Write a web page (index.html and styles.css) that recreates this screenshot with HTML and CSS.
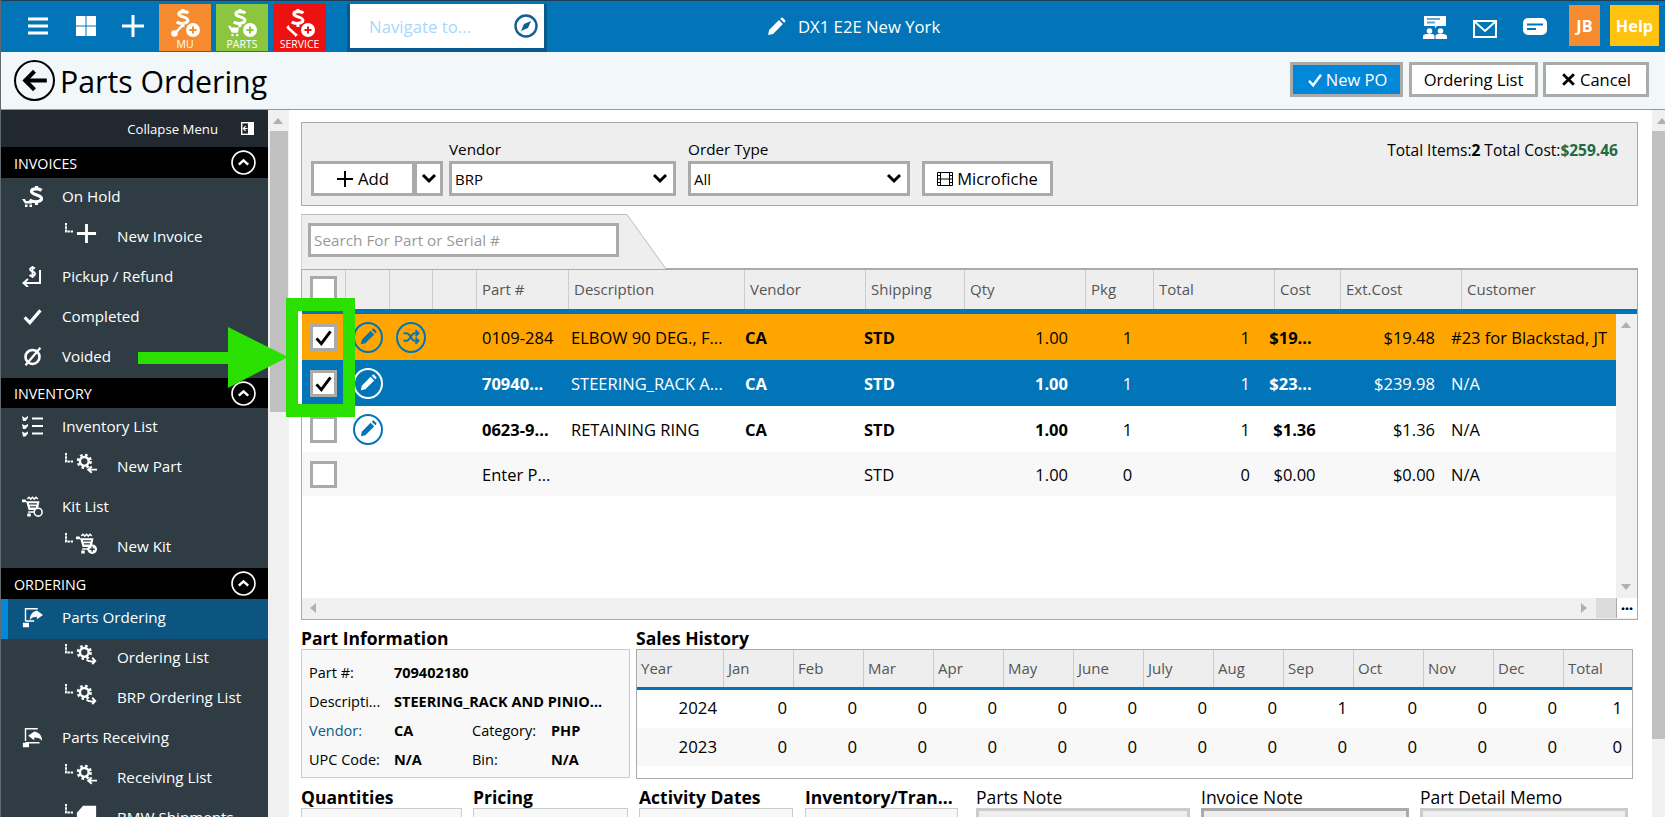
FILE: index.html
```html
<!DOCTYPE html>
<html lang="en">
<head>
<meta charset="utf-8">
<title>Parts Ordering</title>
<link rel="stylesheet" href="styles.css">
</head>
<body>
<svg class="defs" width="0" height="0" aria-hidden="true">
  <symbol id="dollar" viewBox="0 0 16 20"><path d="M14.500 4.500C12.500 2.500 4 2 4 5.500S14 8.500 14 12.500 5 17 1.500 14.500M8.500 0v3.500M8.500 16v4" fill="none" stroke="currentColor" stroke-width="3.400"/></symbol>
  <symbol id="onhold" viewBox="0 0 21 21"><path d="M19.500 4.500C17.500 2.500 9.500 2 9.500 5.500S19.500 8.500 19.500 12.500 11 16.500 7.500 14M14.500 0v3M14.500 16v3" fill="none" stroke="currentColor" stroke-width="3.200"/><path fill="currentColor" d="M0 13h3l1 2h6v2.500H3zM3 18.500h2.500V21H3zM7.500 18.500H10V21H7.500z"/></symbol>
  <symbol id="pencil" viewBox="0 0 24 24"><path fill="currentColor" d="M2.500 21.500l1.200-6L15.500 3.700l4.800 4.800L8.500 20.300zM17 2.200l1.300-1.200c.6-.5 1.300-.5 1.800 0l2.900 2.900c.5.5.5 1.200 0 1.800L21.800 7z"/></symbol>
  <symbol id="gear" viewBox="0 0 24 24"><circle cx="9.500" cy="9.500" r="7" fill="none" stroke="currentColor" stroke-width="3.500" stroke-dasharray="2.800 2.700"/><circle cx="9.500" cy="9.500" r="5" fill="none" stroke="currentColor" stroke-width="2.800"/><path d="M24 19h-10M18 15.500L14 19l4 3.500" fill="none" stroke="currentColor" stroke-width="2.200"/></symbol>
  <symbol id="gearo" viewBox="0 0 24 24"><circle cx="9.500" cy="9.500" r="7" fill="none" stroke="currentColor" stroke-width="3.500" stroke-dasharray="2.800 2.700"/><circle cx="9.500" cy="9.500" r="5" fill="none" stroke="currentColor" stroke-width="2.800"/><path d="M12 18c2.500 2 6 2.500 10 1.500M18.500 15.500l3.500 4-3.500 3.500" fill="none" stroke="currentColor" stroke-width="2.200"/></symbol>
  <symbol id="cartfind" viewBox="0 0 24 24"><path d="M6 3.500l2-2 2 2 2-2 2 2 2-2 2 2" fill="none" stroke="currentColor" stroke-width="1.800"/><path fill="currentColor" d="M0 4h4l1 2h15l-2 10H7.500L5 7H0zM7 17.500h11V19H7zM6 20h4v3.500H6z"/><path d="M8 9h9M9 12.500h7" stroke="#2f3c44" stroke-width="1.500"/><circle cx="18.500" cy="18.500" r="4.500" fill="#2f3c44" stroke="currentColor" stroke-width="1.800"/></symbol>
  <symbol id="cartplus" viewBox="0 0 24 24"><path d="M6 3.500l2-2 2 2 2-2 2 2 2-2 2 2" fill="none" stroke="currentColor" stroke-width="1.800"/><path fill="currentColor" d="M0 4h4l1 2h15l-2 10H7.500L5 7H0zM7 17.500h11V19H7zM6 20h4v3.500H6z"/><path d="M8 9h9M9 12.500h7" stroke="#2f3c44" stroke-width="1.500"/><circle cx="18.500" cy="18.500" r="5.500" fill="currentColor"/><path d="M18.500 15.500v6M15.500 18.500h6" stroke="#2f3c44" stroke-width="1.600"/></symbol>
  <symbol id="check" viewBox="0 0 24 24"><path d="M3 13l6 6L21 5" fill="none" stroke="currentColor" stroke-width="3.600"/></symbol>
  <symbol id="up" viewBox="0 0 24 24"><circle cx="12" cy="12" r="11" fill="none" stroke="currentColor" stroke-width="1.600"/><path d="M7.500 14l4.500-4 4.500 4" fill="none" stroke="currentColor" stroke-width="2.400"/></symbol>
  <symbol id="elbow" viewBox="0 0 8 10"><path d="M1 0v8.500h7" fill="none" stroke="currentColor" stroke-width="2" stroke-dasharray="2.500 .8"/></symbol>
  <symbol id="down" viewBox="0 0 16 12"><path d="M2 2l6 6 6-6" fill="none" stroke="currentColor" stroke-width="3"/></symbol>
  <symbol id="tick" viewBox="0 0 24 24"><path d="M4 13l5.500 6L20 5" fill="none" stroke="currentColor" stroke-width="3.300"/></symbol>
  <symbol id="plusbadge" viewBox="0 0 24 24"><circle cx="12" cy="12" r="12" fill="#fff"/><path d="M12 6v12M6 12h12" stroke="currentColor" stroke-width="3.400"/></symbol>
</svg>

<div class="app">
  <header class="topbar">
    <button class="tool" aria-label="Menu"><svg class="i22" viewBox="0 0 22 22"><path d="M1 4h20M1 11h20M1 18h20" stroke="#fff" stroke-width="3"/></svg></button>
    <button class="tool" aria-label="Dashboard"><svg class="i22" viewBox="0 0 22 22"><path fill="#fff" d="M1 1h9.500v9.500H1zM11.500 1H21v9.500h-9.500zM1 11.500h9.500V21H1zM11.500 11.500H21V21h-9.500z"/></svg></button>
    <button class="tool" aria-label="Add"><svg class="i22" viewBox="0 0 22 22"><path d="M11 0v22M0 11h22" stroke="#fff" stroke-width="3"/></svg></button>
    <div class="tiles">
      <div class="tile tile-mu">
        <div class="tile-art">
          <svg class="tile-dollar"><use href="#dollar"/></svg>
          <svg class="tile-key" viewBox="0 0 14 14"><path d="M13 1L6 8" stroke="#fff" stroke-width="2.800"/><circle cx="4" cy="10" r="3.800" fill="#fff"/></svg>
          <svg class="tile-plus"><use href="#plusbadge"/></svg>
        </div>
        <span>MU</span>
      </div>
      <div class="tile tile-parts">
        <div class="tile-art">
          <svg class="tile-dollar"><use href="#dollar"/></svg>
          <svg class="tile-key" viewBox="0 0 14 14"><path fill="#fff" d="M0 1h3l1 2h9l-1.500 6H4.500zM4 10.500h2.500V13H4zM9.500 10.500H12V13H9.500z"/></svg>
          <svg class="tile-plus"><use href="#plusbadge"/></svg>
        </div>
        <span>PARTS</span>
      </div>
      <div class="tile tile-service">
        <div class="tile-art">
          <svg class="tile-dollar"><use href="#dollar"/></svg>
          <svg class="tile-key" viewBox="0 0 14 14"><path d="M2 3l9 8" stroke="#fff" stroke-width="3"/><path d="M0 3l3-3 1 2-2 2zM14 11l-3 3-1-2 2-2z" fill="#fff"/></svg>
          <svg class="tile-plus"><use href="#plusbadge"/></svg>
        </div>
        <span>SERVICE</span>
      </div>
    </div>
    <div class="navbox">
      <span class="nav-placeholder">Navigate to...</span>
      <svg class="compass" viewBox="0 0 24 24"><circle cx="12" cy="12" r="10.500" fill="none" stroke="#0f5f91" stroke-width="2.400"/><path fill="#0f5f91" d="M17 7l-3 7-7 3 3-7z"/></svg>
    </div>
    <div class="location">
      <svg class="loc-pencil"><use href="#pencil"/></svg>
      <span>DX1 E2E New York</span>
    </div>
    <div class="top-right">
      <svg class="top-ico group" viewBox="0 0 24 23"><path fill="#fff" d="M1 0h22v10H14l-2 2.500V10H1z"/><path d="M4 3h13M4 6.500h8" stroke="#5fa8d6" stroke-width="1.800"/><circle cx="6.500" cy="15" r="2.800" fill="#fff"/><circle cx="17.500" cy="15" r="2.800" fill="#fff"/><path fill="#fff" d="M0 23v-2c0-3 2-3 6.500-3s5 0 5 3v2zM12.500 23v-2c0-3 1-3 5-3s6.500 0 6.500 3v2z"/></svg>
      <svg class="top-ico mail" viewBox="0 0 24 18"><path d="M1 1h22v16H1z" fill="none" stroke="#fff" stroke-width="2"/><path d="M2 2l10 9 10-9" fill="none" stroke="#fff" stroke-width="2"/></svg>
      <svg class="top-ico chat" viewBox="0 0 24 17"><rect width="24" height="17" rx="5" fill="#fff"/><path d="M4 6.500h16M4 11h9" stroke="#0275b8" stroke-width="2"/></svg>
      <div class="badge badge-jb">JB</div>
      <div class="badge badge-help">Help</div>
    </div>
  </header>

  <div class="pagehead">
    <svg class="back" viewBox="0 0 40 40"><circle cx="20" cy="20" r="19" fill="none" stroke="#000" stroke-width="2"/><path d="M32 20H11M20 11l-9 9 9 9" fill="none" stroke="#000" stroke-width="4"/></svg>
    <h1 class="pagetitle">Parts Ordering</h1>
    <div class="head-actions">
      <button class="btn btn-primary"><svg class="btn-tick"><use href="#tick"/></svg>New PO</button>
      <button class="btn btn-order">Ordering List</button>
      <button class="btn btn-cancel"><svg class="btn-x" viewBox="0 0 14 14"><path d="M2 2l10 10M12 2L2 12" stroke="#000" stroke-width="2.600"/></svg>Cancel</button>
    </div>
  </div>

  <div class="workspace">
    <nav class="sidebar">
      <div class="collapse">
        <span>Collapse Menu</span>
        <svg class="collapse-ico" viewBox="0 0 14 14"><path fill="#fff" d="M0 0h14v14H0z"/><path fill="#22282f" d="M1.500 1.500h6v11h-6z"/><path d="M2.500 7H7M5 4.500L2.500 7 5 9.500" stroke="#fff" fill="none" stroke-width="1.300"/></svg>
      </div>
      <div class="sect"><span>INVOICES</span><svg class="sect-ico"><use href="#up"/></svg></div>
      <a class="row"><svg class="row-ico"><use href="#onhold"/></svg><span>On Hold</span></a>
      <a class="row sub"><svg class="elbow"><use href="#elbow"/></svg><svg class="sub-ico" viewBox="0 0 22 22"><path d="M11 1v20M1 11h20" stroke="#fff" stroke-width="3"/></svg><span>New Invoice</span></a>
      <a class="row"><svg class="row-ico" viewBox="0 0 21 21"><path d="M13 2.500c-2-1.500-5-1-5 1s5.500 2 5 4.500-4 2.500-5.500 1M10.500 0v12" fill="none" stroke="#fff" stroke-width="1.900"/><path d="M18 4v13H2M6 13l-4.500 4L6 21" fill="none" stroke="#fff" stroke-width="2"/></svg><span>Pickup / Refund</span></a>
      <a class="row"><svg class="row-ico"><use href="#check"/></svg><span>Completed</span></a>
      <a class="row"><svg class="row-ico" viewBox="0 0 24 24"><circle cx="12" cy="12.500" r="8" fill="none" stroke="#fff" stroke-width="3"/><path d="M4 22L21 2" stroke="#fff" stroke-width="2.500"/></svg><span>Voided</span></a>
      <div class="sect sect-b"><span>INVENTORY</span><svg class="sect-ico"><use href="#up"/></svg></div>
      <a class="row"><svg class="row-ico" viewBox="0 0 21 21"><path d="M10 2.500h11M10 10h11M10 17.500h11" stroke="#fff" stroke-width="1.800"/><path d="M0 0l3 2 3-2v2L3.500 5H1zM0 8l3 1.500L6 8v2l-2.500 3H1zM0 15.500l3 1.500 3-1.500v2L3.500 20.500H1z" fill="#fff"/></svg><span>Inventory List</span></a>
      <a class="row sub"><svg class="elbow"><use href="#elbow"/></svg><svg class="sub-ico"><use href="#gear"/></svg><span>New Part</span></a>
      <a class="row"><svg class="row-ico"><use href="#cartfind"/></svg><span>Kit List</span></a>
      <a class="row sub"><svg class="elbow"><use href="#elbow"/></svg><svg class="sub-ico"><use href="#cartplus"/></svg><span>New Kit</span></a>
      <div class="sect"><span>ORDERING</span><svg class="sect-ico"><use href="#up"/></svg></div>
      <a class="row active"><svg class="row-ico" viewBox="0 0 24 24"><path d="M4 16V2h14M4 16h10" fill="none" stroke="#fff" stroke-width="1.600"/><path fill="#fff" d="M17 4l7 5-7 5v-3c-4 0-6 1-8 4 0-6 3-10 8-11zM1 18h7v5H1z"/></svg><span>Parts Ordering</span></a>
      <a class="row sub"><svg class="elbow"><use href="#elbow"/></svg><svg class="sub-ico"><use href="#gearo"/></svg><span>Ordering List</span></a>
      <a class="row sub"><svg class="elbow"><use href="#elbow"/></svg><svg class="sub-ico"><use href="#gearo"/></svg><span>BRP Ordering List</span></a>
      <a class="row"><svg class="row-ico" viewBox="0 0 24 24"><path d="M4 16V2h14M4 18h16" fill="none" stroke="#fff" stroke-width="1.600"/><path fill="#fff" d="M14 5L7 10l7 5v-3c4 0 7 1 9 4 0-6-3-10-9-11zM1 18h7v5H1z"/></svg><span>Parts Receiving</span></a>
      <a class="row sub"><svg class="elbow"><use href="#elbow"/></svg><svg class="sub-ico"><use href="#gear"/></svg><span>Receiving List</span></a>
      <a class="row sub"><svg class="elbow"><use href="#elbow"/></svg><svg class="sub-ico" viewBox="0 0 24 24"><path fill="#fff" d="M8 2h15v22H1v-14z"/></svg><span>BMW Shipments</span></a>
    </nav>

    <div class="vscroll vscroll-side"><i class="arrow-up"></i><div class="thumb thumb-side"></div></div>

    <main class="main">
      <section class="toolbar">
        <div class="addgroup">
          <button class="btn-add"><svg class="add-plus" viewBox="0 0 16 16"><path d="M8 0v16M0 8h16" stroke="#000" stroke-width="2"/></svg>Add</button>
          <button class="btn-caret" aria-label="More"><svg class="caret"><use href="#down"/></svg></button>
        </div>
        <label class="field field-vendor"><span class="field-label">Vendor</span><span class="select"><span>BRP</span><svg class="caret"><use href="#down"/></svg></span></label>
        <label class="field field-type"><span class="field-label">Order Type</span><span class="select"><span>All</span><svg class="caret"><use href="#down"/></svg></span></label>
        <button class="btn-fiche"><svg class="film" viewBox="0 0 16 16"><path d="M.5 1.500h15v13H.5z" fill="none" stroke="#000"/><path d="M3.500 1.500v13M12.500 1.500v13M3.500 8h9" stroke="#000"/><path d="M.5 4.500h3M.5 8h3M.5 11.500h3M12.500 4.500h3M12.500 8h3M12.500 11.500h3" stroke="#000"/></svg>Microfiche</button>
        <div class="totals">Total Items:<b>2</b> Total Cost:<b class="money">$259.46</b></div>
      </section>

      <div class="tabstrip">
        <svg class="tabshape" viewBox="0 0 366 55" preserveAspectRatio="none"><path d="M0 55V.5h326L365 55" fill="#eee" stroke="#bbb"/></svg>
        <div class="search">Search For Part or Serial #</div>
      </div>

      <section class="grid">
        <div class="ghead">
          <div class="gh gh-check"><span class="box box-head"></span></div>
          <div class="gh"></div><div class="gh"></div><div class="gh"></div>
          <div class="gh">Part #</div><div class="gh">Description</div><div class="gh">Vendor</div><div class="gh">Shipping</div><div class="gh">Qty</div><div class="gh">Pkg</div><div class="gh">Total</div><div class="gh">Cost</div><div class="gh">Ext.Cost</div><div class="gh gh-last">Customer</div>
        </div>
        <div class="gbody">
          <div class="grows">
            <div class="gr gr-orange">
              <div class="c c-c"><span class="box box-on"><svg class="tickmark"><use href="#tick"/></svg></span></div>
              <div class="c c-c"><span class="circ"><svg class="circ-ico"><use href="#pencil"/></svg></span></div>
              <div class="c c-c"><span class="circ"><svg class="circ-ico" viewBox="0 0 24 24"><path d="M2 7h4c5 0 6 10 11 10h4M2 17h4c5 0 6-10 11-10h4" fill="none" stroke="currentColor" stroke-width="2.400"/><path d="M18 3l4 4-4 4M18 13l4 4-4 4" fill="none" stroke="currentColor" stroke-width="2.400"/></svg></span></div>
              <div class="c"></div>
              <div class="c c-p">0109-284</div><div class="c c-d">ELBOW 90 DEG., F...</div><div class="c b">CA</div><div class="c b">STD</div>
              <div class="c c-r">1.00</div><div class="c c-m">1</div><div class="c c-r">1</div><div class="c c-m c-t b">$19...</div><div class="c c-r">$19.48</div><div class="c c-u">#23 for Blackstad, JT</div>
            </div>
            <div class="gr gr-blue">
              <div class="c c-c"><span class="box box-on"><svg class="tickmark"><use href="#tick"/></svg></span></div>
              <div class="c c-c"><span class="circ"><svg class="circ-ico"><use href="#pencil"/></svg></span></div>
              <div class="c"></div><div class="c"></div>
              <div class="c c-p b">70940...</div><div class="c c-d">STEERING_RACK A...</div><div class="c b">CA</div><div class="c b">STD</div>
              <div class="c c-r b">1.00</div><div class="c c-m">1</div><div class="c c-r">1</div><div class="c c-m c-t b">$23...</div><div class="c c-r">$239.98</div><div class="c c-u">N/A</div>
            </div>
            <div class="gr">
              <div class="c c-c"><span class="box"></span></div>
              <div class="c c-c"><span class="circ"><svg class="circ-ico"><use href="#pencil"/></svg></span></div>
              <div class="c"></div><div class="c"></div>
              <div class="c c-p b">0623-9...</div><div class="c c-d">RETAINING RING</div><div class="c b">CA</div><div class="c b">STD</div>
              <div class="c c-r b">1.00</div><div class="c c-m">1</div><div class="c c-r">1</div><div class="c c-m b">$1.36</div><div class="c c-r">$1.36</div><div class="c c-u">N/A</div>
            </div>
            <div class="gr gr-alt">
              <div class="c c-c"><span class="box"></span></div>
              <div class="c"></div><div class="c"></div><div class="c"></div>
              <div class="c c-p">Enter P...</div><div class="c c-d"></div><div class="c"></div><div class="c">STD</div>
              <div class="c c-r">1.00</div><div class="c c-m">0</div><div class="c c-r">0</div><div class="c c-m">$0.00</div><div class="c c-r">$0.00</div><div class="c c-u">N/A</div>
            </div>
          </div>
          <div class="grid-vs"><i class="arrow-up"></i><i class="arrow-down"></i></div>
        </div>
        <div class="grid-hs"><i class="arrow-left"></i><i class="arrow-right"></i><span class="hs-corner"></span><span class="hs-more">...</span></div>
      </section>

      <div class="info-row">
        <section class="part-info">
          <h2 class="h">Part Information</h2>
          <div class="pi-box">
            <div class="pi-line"><span class="pi-l">Part #:</span><b>709402180</b></div>
            <div class="pi-line"><span class="pi-l">Descripti...</span><b>STEERING_RACK AND PINIO...</b></div>
            <div class="pi-line"><span class="pi-l pi-link">Vendor:</span><b class="pi-v">CA</b><span class="pi-l2">Category:</span><b>PHP</b></div>
            <div class="pi-line"><span class="pi-l">UPC Code:</span><b class="pi-v">N/A</b><span class="pi-l2">Bin:</span><b>N/A</b></div>
          </div>
        </section>
        <section class="sales">
          <h2 class="h">Sales History</h2>
          <div class="sales-box">
            <div class="sh-head"><span>Year</span><span>Jan</span><span>Feb</span><span>Mar</span><span>Apr</span><span>May</span><span>June</span><span>July</span><span>Aug</span><span>Sep</span><span>Oct</span><span>Nov</span><span>Dec</span><span>Total</span></div>
            <div class="sh-row"><span>2024</span><span>0</span><span>0</span><span>0</span><span>0</span><span>0</span><span>0</span><span>0</span><span>0</span><span>1</span><span>0</span><span>0</span><span>0</span><span>1</span></div>
            <div class="sh-row sh-alt"><span>2023</span><span>0</span><span>0</span><span>0</span><span>0</span><span>0</span><span>0</span><span>0</span><span>0</span><span>0</span><span>0</span><span>0</span><span>0</span><span>0</span></div>
          </div>
        </section>
      </div>

      <div class="lower-row">
        <section class="lw lw-q"><h2 class="h">Quantities</h2><div class="lw-box"></div></section>
        <section class="lw lw-p"><h2 class="h">Pricing</h2><div class="lw-box"></div></section>
        <section class="lw lw-a"><h2 class="h">Activity Dates</h2><div class="lw-box"></div></section>
        <section class="lw lw-i"><h2 class="h">Inventory/Tran...</h2><div class="lw-box"></div></section>
        <section class="lw lw-n1"><h3 class="hn">Parts Note</h3><div class="note"></div></section>
        <section class="lw lw-n2"><h3 class="hn">Invoice Note</h3><div class="note note-dark"></div></section>
        <section class="lw lw-n3"><h3 class="hn">Part Detail Memo</h3><div class="note"></div></section>
      </div>
    </main>

    <div class="vscroll vscroll-main"><i class="arrow-up"></i><div class="thumb thumb-main"></div></div>
  </div>

  <div class="callout-frame"></div>
  <svg class="callout-arrow" viewBox="0 0 150 61"><path fill="#2ae000" d="M0 25h90V0l60 30-60 31V37H0z"/></svg>
</div>
</body>
</html>
```
FILE: styles.css
```css
* { box-sizing: border-box; }
html, body { margin: 0; padding: 0; height: 100%; overflow: hidden; background: #fff; }
body { font-family: "Open Sans", "Noto Sans", sans-serif; font-size: 15px; color: #000; }
button { font: inherit; padding: 0; cursor: pointer; }
h1, h2, h3 { margin: 0; }
.defs { position: absolute; }

.app { position: relative; width: 1665px; height: 817px; border-left: 1px solid #5f6a70; overflow: hidden; display: flex; flex-direction: column; }

/* top bar */
.topbar { height: 52px; flex: none; background: #0275b8; border-top: 1px solid #1d3f52; display: flex; align-items: flex-start; padding-left: 12px; color: #fff; position: relative; }
.tool { width: 49px; height: 51px; background: none; border: 0; display: flex; align-items: center; justify-content: center; margin-top: -1px; }
.tool:nth-child(2) { width: 47px; }
.tool:nth-child(3) { width: 47px; }
.i22 { width: 22px; height: 22px; }
.tiles { display: flex; gap: 5px; margin-left: 3px; margin-top: 3px; }
.tile { width: 52px; height: 47px; display: flex; flex-direction: column; align-items: center; color: #fff; font-size: 10.5px; line-height: 12px; }
.tile-service { width: 53px; }
.tile-mu { background: #f68b2f; color: #f68b2f; }
.tile-parts { background: #8cc63f; color: #8cc63f; }
.tile-service { background: #ee1111; color: #ee1111; }
.tile span { color: #fff; }
.tile-art { position: relative; width: 30px; height: 34px; }
.tile-dollar { position: absolute; left: 5px; top: 5px; width: 15px; height: 18px; color: #fff; }
.tile-key { position: absolute; left: 1px; top: 21px; width: 12px; height: 12px; }
.tile-plus { position: absolute; left: 16px; top: 19px; width: 14px; height: 14px; }

.navbox { width: 200px; height: 48px; margin-left: 21px; margin-top: 3px; border: solid #075a8c; border-width: 0 3px 4px 3px; background: #fff; display: flex; align-items: center; padding: 0 6px 0 19px; }
.nav-placeholder { flex: 1; font-size: 16.8px; color: #a6d8fb; }
.compass { width: 24px; height: 24px; }
.location { display: flex; align-items: center; gap: 12px; margin-left: 219px; height: 51px; }
.location span { font-size: 16.7px; }
.loc-pencil { width: 20px; height: 22px; color: #fff; }
.top-right { position: absolute; right: 6px; top: 4px; display: flex; align-items: flex-start; }
.top-ico { flex: none; }
.top-ico.group { width: 24px; height: 23px; margin-top: 11px; }
.top-ico.mail { width: 24px; height: 18px; margin-left: 26px; margin-top: 15px; }
.top-ico.chat { width: 24px; height: 17px; margin-left: 26px; margin-top: 13px; }
.badge { height: 41px; display: flex; align-items: center; justify-content: center; font-weight: 700; color: #fff; font-size: 16.3px; }
.badge-jb { width: 31px; background: #f68b2f; margin-left: 22px; }
.badge-help { width: 49px; background: #ffc20e; margin-left: 10px; }

/* page header */
.pagehead { height: 58px; flex: none; background: #f2f7fa; border-bottom: 1px solid #6aa9cf; display: flex; align-items: center; padding-left: 13px; }
.back { width: 41px; height: 41px; flex: none; margin-top: -1px; }
.pagetitle { font-weight: 400; font-size: 30.3px; margin-left: 5px; line-height: 40px; margin-top: 3px; }
.head-actions { margin-left: auto; margin-right: 16px; display: flex; gap: 6px; margin-top: -2px; }
.btn { height: 35px; border: 3px solid #aaa; background: #fff; display: flex; align-items: center; justify-content: center; font-size: 16.5px; }
.btn-primary { width: 113px; background: #0288d8; color: #fff; }
.btn-order { width: 129px; }
.btn-cancel { width: 106px; margin-left: -1px; }
.btn-tick { width: 18px; height: 18px; color: #fff; margin-right: 2px; }
.btn-x { width: 15px; height: 15px; margin-right: 4px; }

/* sidebar */
.workspace { flex: 1; min-height: 0; display: flex; align-items: stretch; overflow: hidden; }
.sidebar { width: 267px; flex: none; background: #2f3c44; color: #fff; display: flex; flex-direction: column; overflow: hidden; }
.collapse { height: 37px; flex: none; background: #22282f; display: flex; align-items: center; justify-content: flex-end; font-size: 13.2px; padding-right: 14px; }
.collapse-ico { width: 13px; height: 13px; margin-left: 23px; }
.sect { height: 31px; flex: none; background: #000; display: flex; align-items: center; justify-content: space-between; font-size: 14.3px; padding: 0 12px 0 13px; }
.sect span { padding-top: 1px; }
.sect-b { height: 30px; }
.sect-ico { width: 25px; height: 25px; color: #fff; }
.row { height: 40px; flex: none; display: flex; align-items: center; padding: 0 0 4px 21px; font-size: 15.2px; color: #fff; }
.row-ico { width: 21px; height: 21px; flex: none; margin-right: 19px; color: #fff; }
.row.sub { padding-left: 64px; }
.elbow { width: 8px; height: 10px; flex: none; align-self: flex-start; margin-top: 5px; color: #fff; }
.sub-ico { width: 21px; height: 21px; flex: none; margin: 0 20px 6px 3px; color: #fff; }
.row.active { background: #0c5580; border-left: 7px solid #0288d8; padding-left: 14px; }

/* scrollbars */
.vscroll { flex: none; background: #f0f0f0; position: relative; padding-top: 21px; }
.vscroll-side { width: 21px; }
.vscroll-main { width: 13px; }
.thumb { background: #c0c0c0; width: 100%; }
.thumb-side { height: 281px; width: 18px; margin-left: 2px; }
.thumb-main { height: 608px; }
.arrow-up, .arrow-down, .arrow-left, .arrow-right { position: absolute; width: 0; height: 0; border: 5px solid transparent; }
.arrow-up { border-top-width: 0; border-bottom: 6px solid #b0b0b0; top: 8px; left: 5px; }
.arrow-down { border-bottom-width: 0; border-top: 6px solid #b0b0b0; bottom: 8px; left: 5px; }
.arrow-left { border-left-width: 0; border-right: 6px solid #b0b0b0; left: 8px; top: 5px; }
.arrow-right { border-right-width: 0; border-left: 6px solid #b0b0b0; right: 50px; top: 5px; }

/* main */
.main { flex: none; width: 1363px; padding: 12px 14px 0 12px; overflow: hidden; background: #fff; }
.toolbar { height: 84px; background: #eee; border: 1px solid #aaa; display: flex; align-items: flex-end; padding: 0 0 9px 9px; position: relative; }
.addgroup { display: flex; }
.btn-add { width: 104px; height: 35px; border: 3px solid #aaa; background: #fff; display: flex; align-items: center; justify-content: center; font-size: 16.8px; }
.add-plus { width: 16px; height: 16px; margin-right: 5px; }
.btn-caret { width: 29px; height: 35px; margin-left: -1px; border: 3px solid #aaa; background: #fff; display: flex; align-items: center; justify-content: center; }
.caret { width: 16px; height: 12px; color: #000; flex: none; }
.field { display: flex; flex-direction: column; }
.field-label { height: 22px; font-size: 15.3px; line-height: 20px; }
.select { height: 35px; border: 3px solid #aaa; background: #fff; display: flex; align-items: center; justify-content: space-between; padding: 0 5px 0 3px; font-size: 15px; }
.field-vendor { width: 227px; margin-left: 6px; }
.field-type { width: 222px; margin-left: 12px; }
.btn-fiche { width: 131px; height: 35px; margin-left: 12px; border: 3px solid #aaa; background: #fff; display: flex; align-items: center; justify-content: center; font-size: 16.5px; }
.film { width: 16px; height: 16px; margin-right: 4px; }
.totals { position: absolute; right: 19px; top: 15px; font-size: 15.5px; line-height: 24px; }
.money { color: #1e6b45; }

.tabstrip { height: 54px; margin-top: 8px; position: relative; padding: 9px 0 0 7px; }
.tabshape { position: absolute; left: 0; top: 0; width: 366px; height: 55px; }
.search { position: relative; width: 311px; height: 34px; border: 3px solid #aaa; background: #fff; font-size: 15.3px; color: #999; line-height: 28px; padding-left: 3px; }

/* grid */
.grid { height: 352px; border: solid #aaa; border-width: 2px 1px 1px 1px; display: flex; flex-direction: column; background: #fff; }
.ghead { height: 39px; flex: none; display: grid; grid-template-columns: 44px 44px 43px 44px 92px 176px 121px 99px 121px 68px 121px 66px 121px 1fr; background: #eee; font-size: 15px; color: #555; }
.gh { border-right: 1px solid #ccc; display: flex; align-items: center; padding-left: 3px; line-height: 1; }
.gh:nth-child(n+5) { padding-left: 5px; }
.gh-last { border-right: 0; }
.gh-check { padding: 6px 0 0 8px; align-items: flex-start; }
.gbody { flex: 1; min-height: 0; display: flex; border-top: 5px solid #0275b8; }
.grows { width: 1314px; flex: none; }
.grid-vs { flex: 1; background: #f0f0f0; position: relative; }
.gr { height: 46px; display: grid; grid-template-columns: 44px 44px 43px 44px 92px 176px 119px 111px 100px 105px 77px 75px 110px 174px; align-items: center; font-size: 16.5px; }
.gr-alt { height: 44px; background: #f8f8f8; }
.gr-orange { background: #ffa500; }
.gr-blue { background: #0275b8; color: #fff; }
.c { white-space: nowrap; min-width: 0; }
.c-c { display: flex; justify-content: center; }
.c-c:first-child { justify-content: flex-start; padding-left: 8px; }
.c-p { padding-left: 5px; }
.c-d { padding-left: 2px; }
.c-r { text-align: right; padding-right: 7px; }
.c-m { text-align: center; }
.c-t { padding-right: 8px; }
.c-u { padding-left: 9px; }
.b { font-weight: 700; }
.box { width: 27px; height: 27px; border: 3px solid #aaa; background: #fff; display: flex; align-items: center; justify-content: center; flex: none; }
.tickmark { width: 21px; height: 21px; color: #000; }
.circ { width: 30px; height: 31px; border: 2px solid #0275b8; border-radius: 50%; background: transparent; display: flex; align-items: center; justify-content: center; color: #0275b8; margin-left: -1px; }
.gr-blue .circ { border-color: #fff; color: #fff; }
.circ-ico { width: 18px; height: 18px; }
.grid-hs { height: 21px; flex: none; background: #f0f0f0; position: relative; }
.hs-corner { position: absolute; right: 21px; top: 0; width: 20px; height: 20px; background: #dcdcdc; }
.hs-more { position: absolute; right: 0; top: 0; width: 21px; height: 20px; background: #fff; border-left: 1px solid #aaa; font-size: 14px; font-weight: 800; line-height: 13px; text-align: center; }

/* info */
.h { font-size: 17.5px; font-weight: 700; line-height: 22px; white-space: nowrap; }
.info-row { display: flex; margin-top: 7px; }
.part-info { width: 329px; flex: none; }
.pi-box { height: 129px; background: #f8f8f8; border: 1px solid #ccc; padding: 8px 0 0 7px; font-size: 14.5px; }
.pi-line { height: 29px; display: flex; align-items: center; white-space: nowrap; }
.pi-l { width: 85px; flex: none; white-space: nowrap; }
.pi-link { color: #0c5a8a; }
.pi-v { width: 78px; flex: none; }
.pi-l2 { width: 79px; flex: none; }
.sales { margin-left: 6px; width: 997px; flex: none; }
.sales-box { height: 130px; border: 1px solid #aaa; }
.sh-head, .sh-row { display: grid; grid-template-columns: 87px repeat(12, 70px) 1fr; }
.sh-head { height: 37px; background: #eee; color: #555; font-size: 15px; }
.sh-head span { border-right: 1px solid #ccc; display: flex; align-items: center; padding: 0 0 2px 4px; }
.sh-head span:last-child { border-right: 0; }
.sh-row { height: 38px; align-items: center; font-size: 16.8px; text-align: right; padding-bottom: 2px; }
.sh-row span { padding-right: 7px; }
.sh-row span:last-child { padding-right: 10px; }
.sh-head + .sh-row { border-top: 3px solid #0275b8; height: 41px; padding-bottom: 4px; }
.sh-alt { background: #f8f8f8; }

/* lower */
.lower-row { display: flex; margin-top: 7px; }
.lw { flex: none; }
.lw-q { width: 161px; }
.lw-p { width: 155px; margin-left: 11px; }
.lw-a { width: 154px; margin-left: 11px; }
.lw-i { width: 153px; margin-left: 12px; }
.lw-n1 { width: 214px; margin-left: 18px; }
.lw-n2 { width: 208px; margin-left: 11px; }
.lw-n3 { width: 208px; margin-left: 11px; }
.lw-box { height: 40px; background: #f8f8f8; border: 1px solid #ccc; }
.hn { font-size: 17.5px; font-weight: 400; line-height: 22px; white-space: nowrap; }
.note { height: 40px; background: #eee; border: 3px solid #ccc; }
.note-dark { border-color: #aaa; }

/* callout */
.callout-frame { position: absolute; left: 285px; top: 298px; width: 69px; height: 119px; border: solid #2ae000; border-width: 13px 12px; }
.callout-frame::before { content: ""; position: absolute; left: 0; top: 0; width: 4px; height: 100%; background: #fff; }
.callout-arrow { position: absolute; left: 137px; top: 327px; width: 150px; height: 61px; }
```
